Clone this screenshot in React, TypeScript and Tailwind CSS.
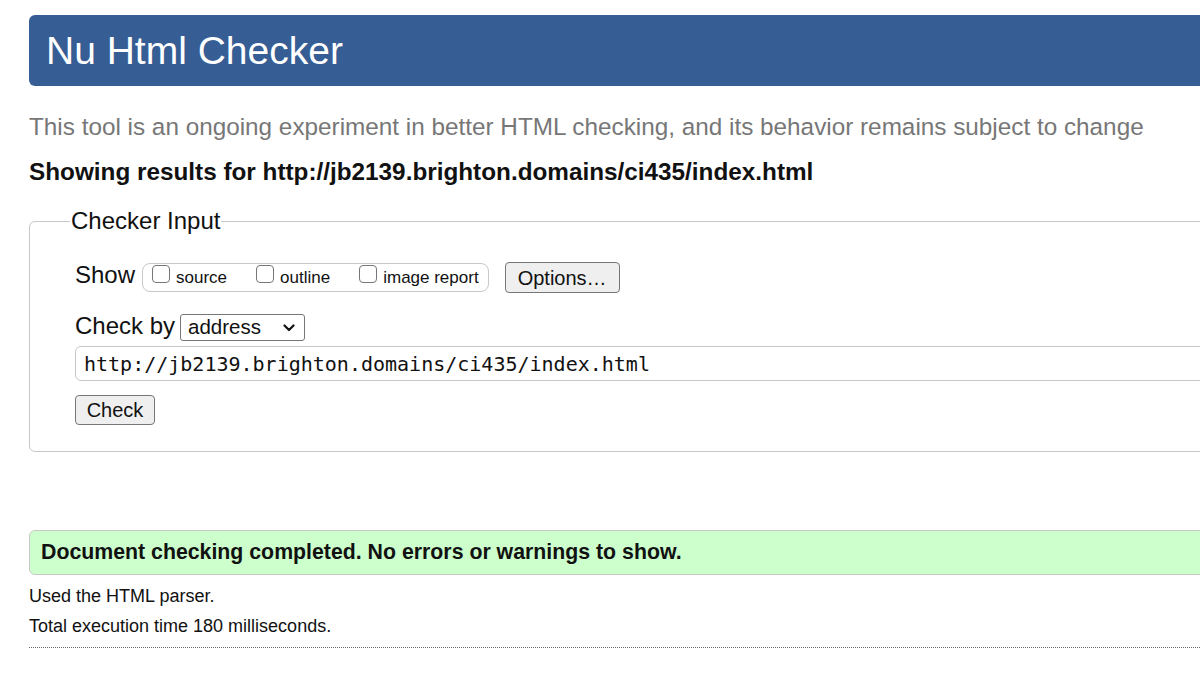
import { FC } from "react";

const Checkbox: FC<{ label: string }> = ({ label }) => {
  return (
    <label className="flex items-start">
      <span className="inline-block w-[18px] h-[18px] mt-[1px] border border-[#767676] rounded-[4px] bg-white mr-[6px]" />
      <span className="mt-[4px] text-[17px] leading-[20px]">{label}</span>
    </label>
  );
};

const Chevron: FC = () => (
  <svg width="12" height="8" viewBox="0 0 12 8" className="ml-auto">
    <path d="M1.5 1.5 L6 6 L10.5 1.5" fill="none" stroke="#111" strokeWidth="2.2" strokeLinecap="round" strokeLinejoin="round" />
  </svg>
);

const App: FC = () => {
  return (
    <div
      className="w-[1200px] h-[680px] overflow-hidden bg-white text-[#111]"
      style={{ fontFamily: '"Liberation Sans", Arial, sans-serif' }}
    >
      <div className="w-[1400px] pl-[29px] pt-[15px]">
        <h1 className="h-[71px] bg-[#365d94] rounded-l-[6px] pl-[17px] flex items-center text-white text-[39px] leading-none pb-[1px]">
          Nu Html Checker
        </h1>

        <p className="mt-[27px] text-[24.3px] leading-[28px] text-[#777]">
          This tool is an ongoing experiment in better HTML checking, and its behavior remains subject to change
        </p>

        <p className="mt-[17px] text-[24.3px] leading-[28px] font-bold">
          Showing results for http://jb2139.brighton.domains/ci435/index.html
        </p>

        <fieldset className="mt-[22px] border border-[#c8c8c8] rounded-[6px] pl-[45px] pb-[26px]">
          <legend className="-ml-[5px] px-[1px] text-[24px] leading-[26px]">Checker Input</legend>

          <div className="flex items-start mt-[26px]">
            <span className="mt-[1px] text-[24px] leading-[28px] mr-[7px]">Show</span>
            <div className="mt-[3px] flex items-start gap-[29px] h-[29px] border border-[#c8c8c8] rounded-[8px] pl-[9px] pr-[9px]">
              <Checkbox label="source" />
              <Checkbox label="outline" />
              <Checkbox label="image report" />
            </div>
            <button className="mt-[2px] ml-[16px] h-[31px] w-[115px] border border-[#767676] rounded-[4px] bg-[#efefef] text-[20px] leading-none">
              Options…
            </button>
          </div>

          <div className="flex items-start mt-[18px]">
            <span className="mt-[1px] text-[24px] leading-[28px] mr-[5px]">Check by</span>
            <div className="mt-[3px] flex items-center w-[125px] h-[27px] border border-[#767676] rounded-[3px] pl-[7px] pr-[9px] text-[20.5px] leading-none">
              address
              <Chevron />
            </div>
          </div>

          <div
            className="mt-[5px] h-[35px] border border-[#c8c8c8] rounded-l-[6px] pl-[8px] flex items-center text-[20px]"
            style={{ fontFamily: '"DejaVu Sans Mono", monospace' }}
          >
            http://jb2139.brighton.domains/ci435/index.html
          </div>

          <button className="mt-[14px] h-[30px] w-[80px] border border-[#767676] rounded-[4px] bg-[#efefef] text-[20px] leading-none">
            Check
          </button>
        </fieldset>

        <div className="mt-[78px] h-[45px] bg-[#ccffcc] border border-[#c8c8c8] rounded-l-[6px] pl-[11px] flex items-center font-bold text-[21.3px]">
          Document checking completed. No errors or warnings to show.
        </div>

        <p className="mt-[10px] text-[18px] leading-[22px]">Used the HTML parser.</p>
        <p className="mt-[8px] text-[18px] leading-[22px]">Total execution time 180 milliseconds.</p>

        <div className="mt-[10px] border-t border-dotted border-[#666]" />
      </div>
    </div>
  );
};

export default App;
